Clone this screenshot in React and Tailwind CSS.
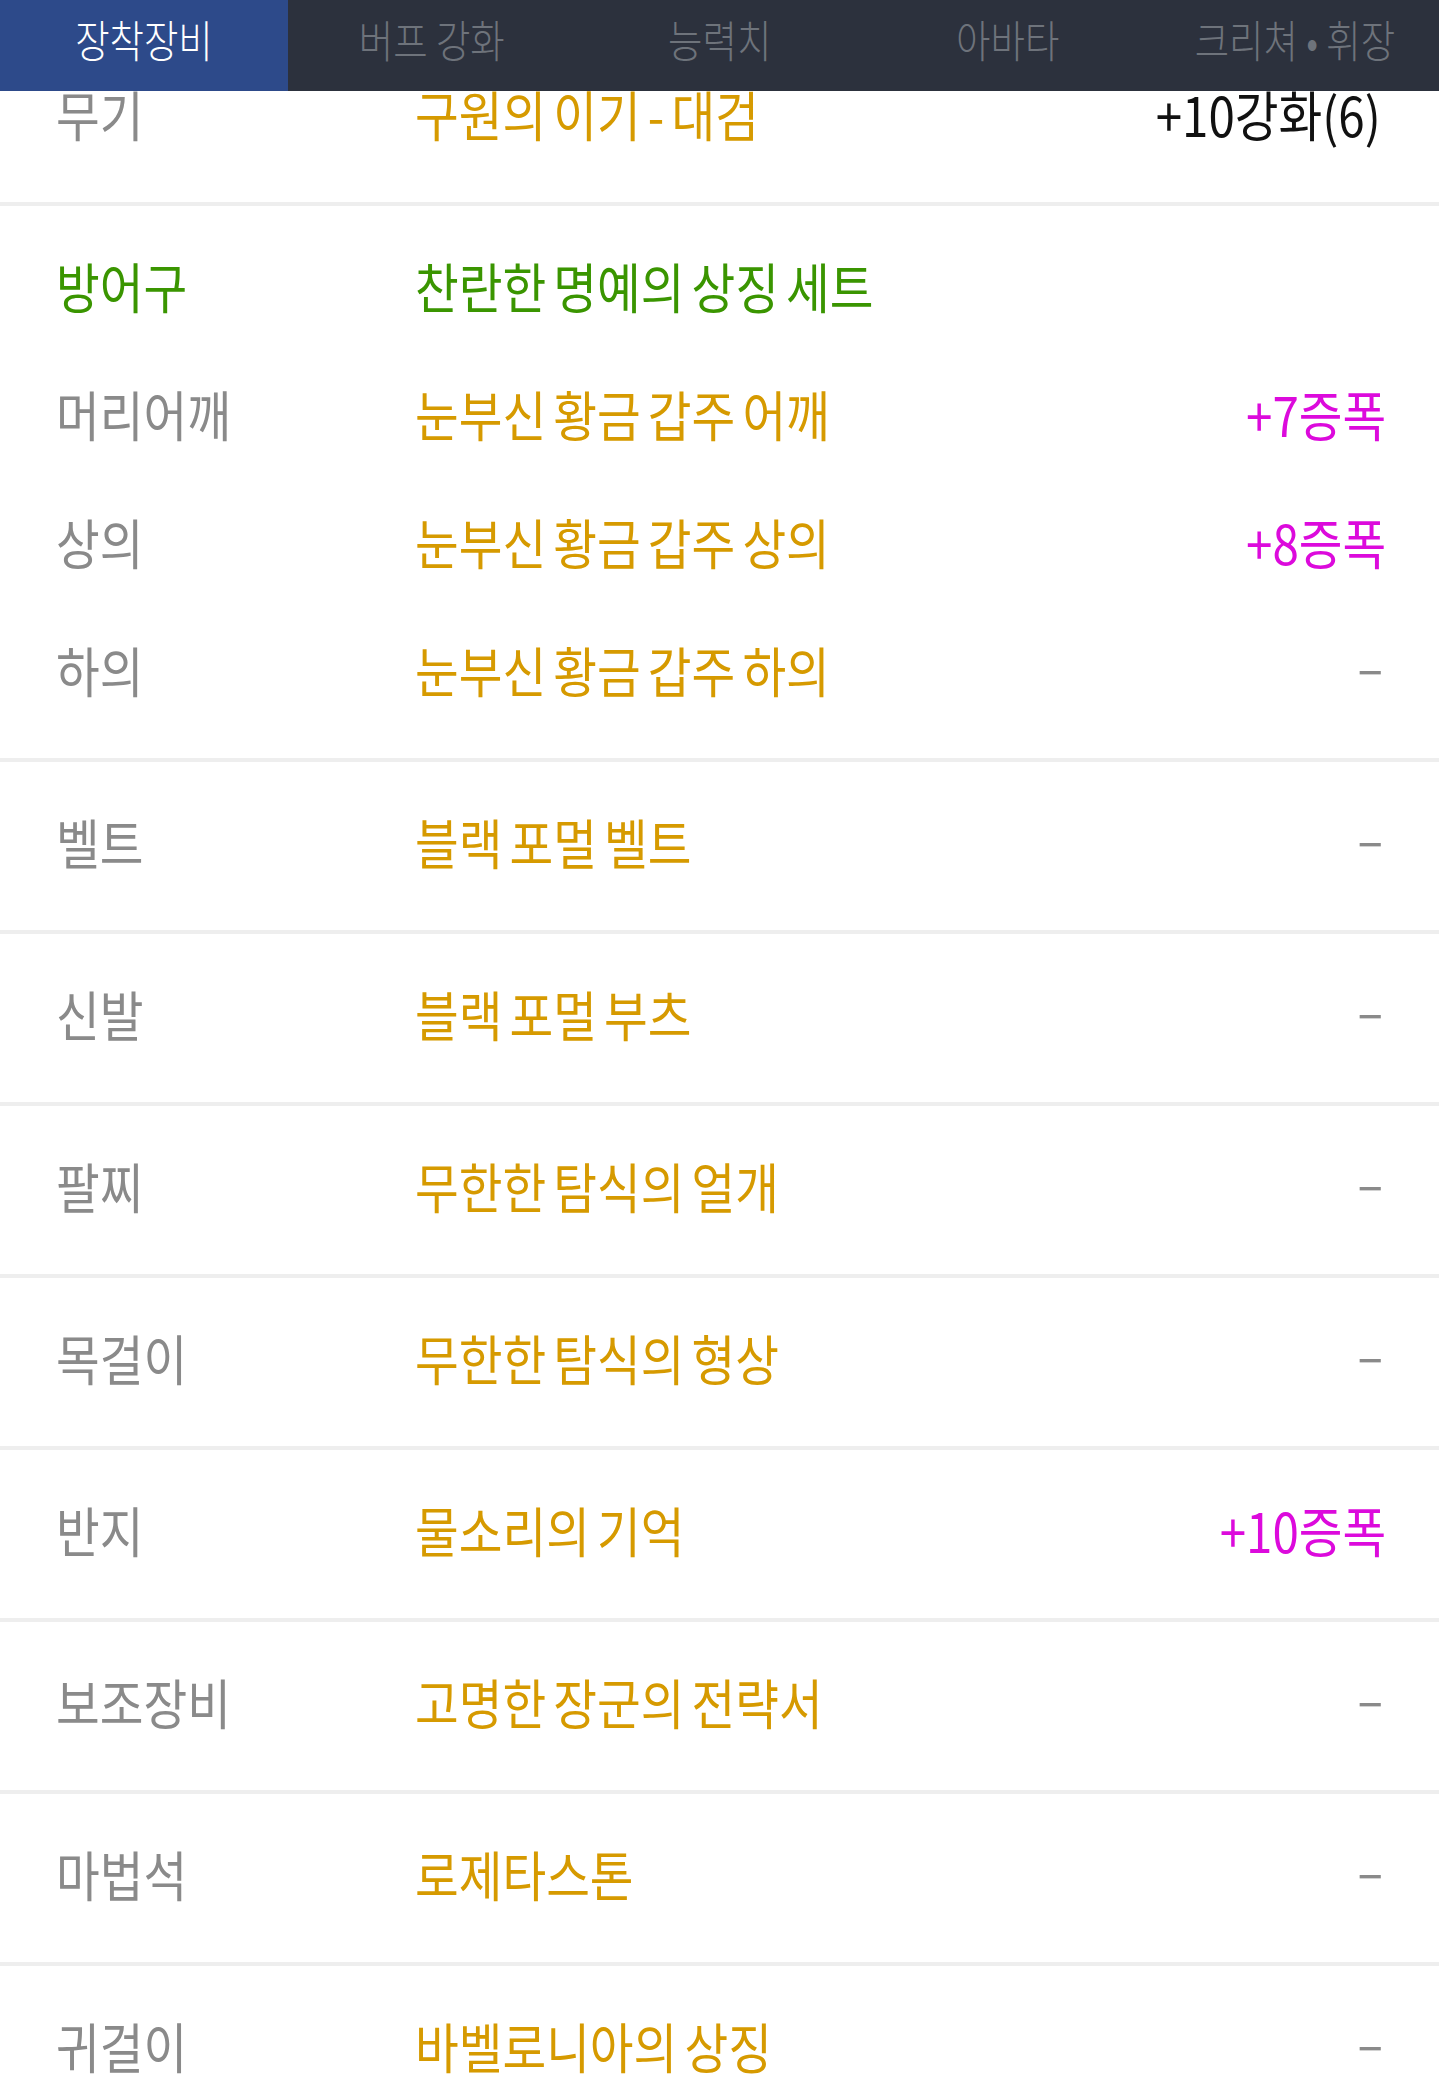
import React from "react";

const tabs = ["장착장비", "버프 강화", "능력치", "아바타", "크리쳐 • 휘장"];

const groups = [
  [{ label: "무기", name: "구원의 이기 - 대검", value: "+10강화(6)", valueType: "enhance" }],
  [
    { label: "방어구", name: "찬란한 명예의 상징 세트", set: true },
    { label: "머리어깨", name: "눈부신 황금 갑주 어깨", value: "+7증폭", valueType: "amp" },
    { label: "상의", name: "눈부신 황금 갑주 상의", value: "+8증폭", valueType: "amp" },
    { label: "하의", name: "눈부신 황금 갑주 하의", value: "–" },
  ],
  [{ label: "벨트", name: "블랙 포멀 벨트", value: "–" }],
  [{ label: "신발", name: "블랙 포멀 부츠", value: "–" }],
  [{ label: "팔찌", name: "무한한 탐식의 얼개", value: "–" }],
  [{ label: "목걸이", name: "무한한 탐식의 형상", value: "–" }],
  [{ label: "반지", name: "물소리의 기억", value: "+10증폭", valueType: "amp" }],
  [{ label: "보조장비", name: "고명한 장군의 전략서", value: "–" }],
  [{ label: "마법석", name: "로제타스톤", value: "–" }],
  [{ label: "귀걸이", name: "바벨로니아의 상징", value: "–" }],
];

const font = { fontFamily: '"Noto Sans CJK KR", "Noto Sans", sans-serif' };

function Value({ item }) {
  if (item.valueType === "amp") {
    return (
      <span className="inline-block origin-right scale-x-[0.88] -translate-y-[4px] whitespace-nowrap text-[#dc0adc]">
        {item.value}
      </span>
    );
  }
  if (item.valueType === "enhance") {
    return (
      <span className="mr-[5px] inline-block origin-right scale-x-[0.88] -translate-y-[4px] whitespace-nowrap text-[#111111]">
        {item.value}
      </span>
    );
  }
  // dash: a bit higher and left than the font's en dash sits
  return (
    <span className="mr-[3px] inline-block origin-right scale-x-[0.88] -translate-y-[9px] whitespace-nowrap text-[#8a8a8a]">
      {item.value}
    </span>
  );
}

function Row({ item }) {
  return (
    <div className="flex h-[128px] items-center text-[54px] font-normal leading-[128px]">
      <div className="w-[359px] shrink-0">
        <span
          className={`inline-block origin-left scale-x-[0.88] -translate-y-[4px] whitespace-nowrap ${
            item.set ? "text-[#3a9500]" : "text-[#8a8a8a]"
          }`}
        >
          {item.label}
        </span>
      </div>
      <div className="flex-1">
        <span
          className={`inline-block origin-left scale-x-[0.88] -translate-y-[4px] whitespace-nowrap [word-spacing:-4px] ${
            item.set ? "text-[#3a9500]" : "text-[#d69a00]"
          }`}
        >
          {item.name}
        </span>
      </div>
      {item.value && (
        <div className="text-right">
          <Value item={item} />
        </div>
      )}
    </div>
  );
}

export default function App() {
  return (
    <div className="min-h-screen bg-white" style={font}>
      <div className="fixed inset-x-0 top-0 z-10 grid h-[91px] grid-cols-5 bg-[#2c313d]">
        {tabs.map((tab, i) => (
          <div
            key={tab}
            className={`flex items-center justify-center pb-[14px] text-[44px] font-light ${
              i === 0 ? "bg-[#2d4a8a] text-white" : "text-[#6e737b]"
            }`}
          >
            <span className="inline-block scale-x-[0.85] whitespace-nowrap">{tab}</span>
          </div>
        ))}
      </div>

      <div className="pt-[34px]">
        {groups.map((group, gi) => (
          <div key={gi} className="border-b-4 border-[#eeeeee] py-[20px] pl-[56px] pr-[53px]">
            {group.map((item) => (
              <Row key={item.label} item={item} />
            ))}
          </div>
        ))}
      </div>
    </div>
  );
}
